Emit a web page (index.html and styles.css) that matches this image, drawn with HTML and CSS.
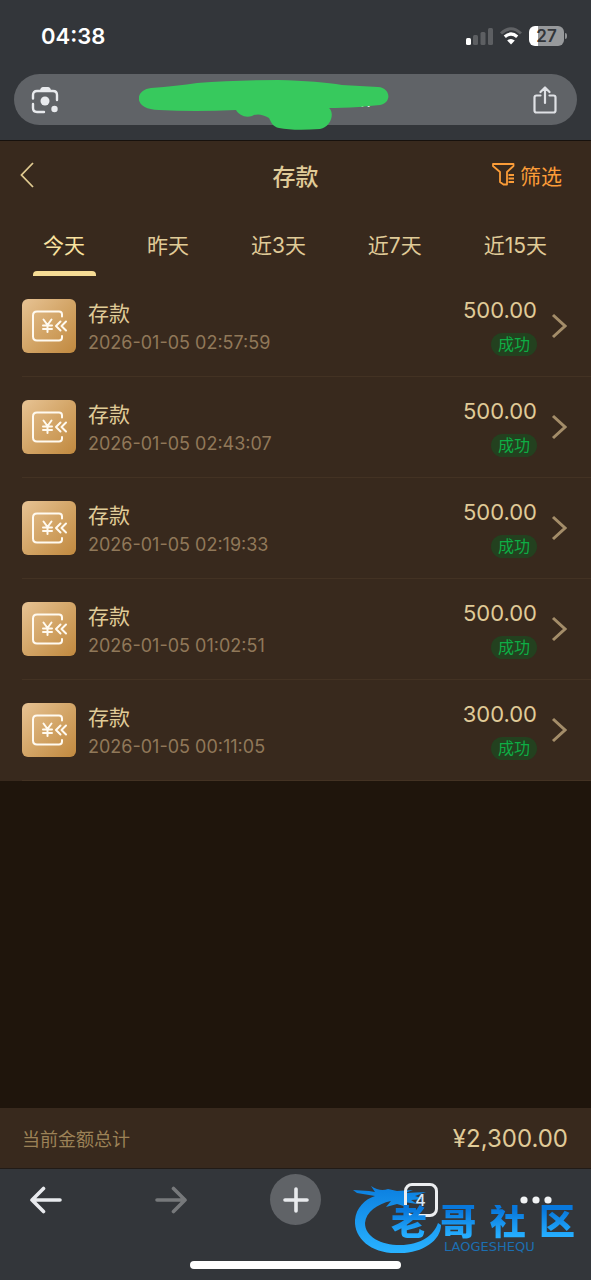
FILE: index.html
```html
<!DOCTYPE html>
<html lang="zh-CN">
<head>
<meta charset="utf-8">
<meta name="viewport" content="width=device-width, initial-scale=1">
<title>存款</title>
<link rel="stylesheet" href="styles.css">
</head>
<body>
<svg class="defs" width="0" height="0" aria-hidden="true">
  <symbol id="deposit" viewBox="0 0 54 54">
    <g fill="none" stroke="#fffaf0" stroke-width="2" stroke-linecap="round" stroke-linejoin="round">
      <path d="M40 17.500v-2q0-3-3-3H15q-4 0-4 4v21q0 4 4 4h22q3 0 3-3V37"/>
      <path d="M21.500 20.500l4 5.500 4-5.500M25.500 26v7M21 26.500h9M21 30h9"/>
      <path d="M38.500 22.500L34 27l4.500 4.500M44 22.500L39.500 27l4.500 4.500"/>
    </g>
  </symbol>
  <symbol id="chevron" viewBox="0 0 16 26">
    <path d="M2 2l12 11L2 24" fill="none" stroke="currentColor" stroke-width="3"/>
  </symbol>
</svg>

<header class="browser-top">
  <div class="status">
    <time class="clock">04:38</time>
    <div class="status-icons">
      <svg width="27" height="18" viewBox="0 0 27 18" aria-hidden="true">
        <rect x="0" y="11" width="5" height="7" rx="1.500" fill="#fff"/>
        <g fill="#5d5f62"><rect x="7" y="8" width="5" height="10" rx="1.500"/><rect x="14.500" y="5" width="5" height="13" rx="1.500"/><rect x="22" y="1" width="5" height="17" rx="1.500"/></g>
      </svg>
      <svg width="22" height="18" viewBox="0 0 22 18" fill="none" aria-hidden="true">
        <path d="M1 6.500q10-9.500 20 0" stroke="#606265" stroke-width="3"/>
        <path d="M4.800 9.800q6.200-5.600 12.400 0" stroke="#fff" stroke-width="3.200"/>
        <path d="M7.200 13.500q3.800-3.200 7.600 0L11 17.500z" fill="#fff"/>
      </svg>
      <div class="battery"><span class="battery-level">27</span></div>
    </div>
  </div>
  <div class="address">
    <button class="icon-btn" aria-label="搜索图片">
      <svg width="28" height="28" viewBox="0 0 28 28" fill="none" stroke="#e8eaed" stroke-width="2.400" stroke-linecap="round" aria-hidden="true">
        <path d="M2 12.500V9q0-4 4-4h16q4 0 4 4v5M2 18v4q0 4 4 4h7"/>
        <path d="M9 4.500Q9.500 1 12 1h5q2.500 0 3 3.500z" fill="#e8eaed" stroke="none"/>
        <circle cx="14" cy="15" r="4.500" fill="#e8eaed" stroke="none"/><circle cx="23.500" cy="23" r="3.200" fill="#e8eaed" stroke="none"/>
      </svg>
    </button>
    <div class="url">
      <span>.com</span>
      <svg class="scribble" width="250" height="50" viewBox="0 0 250 50" aria-hidden="true">
        <path fill="#37c95d" d="M12 8Q38 6 58 3Q95 0 139 0Q180 1 203 5L239 7C252 8 253 23 241 25L220 27Q202 28 190 28C196 33 192 47 181 49Q155 51 140 48C134 47 132 42 130 38Q120 32 113 36C106 38 100 35 97 30Q55 32 20 30C-6 30-5 10 12 8z"/>
      </svg>
    </div>
    <button class="icon-btn" aria-label="分享">
      <svg width="24" height="28" viewBox="0 0 24 28" fill="none" stroke="#dfe1e5" stroke-width="2.200" stroke-linecap="round" stroke-linejoin="round" aria-hidden="true">
        <path d="M7.500 9.500H3.500q-2 0-2 2v13q0 2 2 2h17q2 0 2-2v-13q0-2-2-2h-4M12 17V2M7.500 6L12 1.500 16.500 6"/>
      </svg>
    </button>
  </div>
</header>

<main class="page">
  <div class="panel">
    <div class="title-bar">
      <button class="back" aria-label="返回">
        <svg width="14" height="26" viewBox="0 0 14 26" fill="none" stroke="#e0ca91" stroke-width="1.800" aria-hidden="true"><path d="M13 1L1.500 13 13 25"/></svg>
      </button>
      <h1>存款</h1>
      <button class="filter">
        <svg width="23" height="23" viewBox="0 0 23 23" fill="none" stroke="#fb9c38" stroke-width="1.800" stroke-linejoin="round" aria-hidden="true"><path d="M1 1h20.500v2L15 9v12.500h-3.500L8 19V9L1 3zM16.500 12H22M16.500 15.500H22M16.500 19H22"/></svg>
        筛选
      </button>
    </div>
    <nav class="tabs">
      <button class="tab active">今天</button>
      <button class="tab">昨天</button>
      <button class="tab">近3天</button>
      <button class="tab">近7天</button>
      <button class="tab">近15天</button>
    </nav>
  </div>
  <ul class="list">
    <li><a class="row" href="#"><svg class="badge" aria-hidden="true"><use href="#deposit"/></svg><div class="info"><span class="name">存款</span><time class="date">2026-01-05 02:57:59</time></div><div class="result"><span class="amount">500.00</span><span class="state">成功</span></div><svg class="chevron" aria-hidden="true"><use href="#chevron"/></svg></a></li>
    <li><a class="row" href="#"><svg class="badge" aria-hidden="true"><use href="#deposit"/></svg><div class="info"><span class="name">存款</span><time class="date">2026-01-05 02:43:07</time></div><div class="result"><span class="amount">500.00</span><span class="state">成功</span></div><svg class="chevron" aria-hidden="true"><use href="#chevron"/></svg></a></li>
    <li><a class="row" href="#"><svg class="badge" aria-hidden="true"><use href="#deposit"/></svg><div class="info"><span class="name">存款</span><time class="date">2026-01-05 02:19:33</time></div><div class="result"><span class="amount">500.00</span><span class="state">成功</span></div><svg class="chevron" aria-hidden="true"><use href="#chevron"/></svg></a></li>
    <li><a class="row" href="#"><svg class="badge" aria-hidden="true"><use href="#deposit"/></svg><div class="info"><span class="name">存款</span><time class="date">2026-01-05 01:02:51</time></div><div class="result"><span class="amount">500.00</span><span class="state">成功</span></div><svg class="chevron" aria-hidden="true"><use href="#chevron"/></svg></a></li>
    <li><a class="row" href="#"><svg class="badge" aria-hidden="true"><use href="#deposit"/></svg><div class="info"><span class="name">存款</span><time class="date">2026-01-05 00:11:05</time></div><div class="result"><span class="amount">300.00</span><span class="state">成功</span></div><svg class="chevron" aria-hidden="true"><use href="#chevron"/></svg></a></li>
  </ul>
  <div class="total"><span class="total-label">当前金额总计</span><span class="total-value">¥2,300.00</span></div>
</main>

<footer class="browser-bottom">
  <div class="toolbar">
    <button class="tool" aria-label="后退"><svg width="32" height="28" viewBox="0 0 32 28" fill="none" stroke="#e8eaed" stroke-width="3.600" stroke-linecap="round" stroke-linejoin="round" aria-hidden="true"><path d="M30 14H2M13.500 2.500L2 14l11.500 11.500"/></svg></button>
    <button class="tool" aria-label="前进"><svg width="32" height="28" viewBox="0 0 32 28" fill="none" stroke="#77797b" stroke-width="3.600" stroke-linecap="round" stroke-linejoin="round" aria-hidden="true"><path d="M2 14h28M18.500 2.500L30 14 18.500 25.500"/></svg></button>
    <button class="tool add" aria-label="新标签页"><svg width="26" height="26" viewBox="0 0 26 26" stroke="#e8eaed" stroke-width="3.600" stroke-linecap="round" aria-hidden="true"><path d="M2 13h22M13 2v22"/></svg></button>
    <button class="tool"><span class="count">4</span></button>
    <button class="tool more" aria-label="更多"><svg width="32" height="8" viewBox="0 0 32 8" fill="#f1f3f4" aria-hidden="true"><circle cx="4" cy="4" r="3.600"/><circle cx="16" cy="4" r="3.600"/><circle cx="28" cy="4" r="3.600"/></svg></button>
  </div>
  <div class="home-bar"></div>
  <div class="watermark">
    <svg class="dragon" width="92" height="70" viewBox="0 0 92 70" aria-hidden="true">
      <defs><linearGradient id="blue" x1="0" y1="0" x2="0" y2="1"><stop offset="0" stop-color="#0b7fe0"/><stop offset="1" stop-color="#29b2ff"/></linearGradient></defs>
      <path fill="url(#blue)" d="M0 5L16 6 22 7 18 1Q27 7 35 4L44 6 60 5 52 8 73 7 62 11 71 14 58 15 64 19 51 17 54 22 44 19 33 22 38 16C24 19 13 27 12 38C12 52 28 60 47 60C68 60 81 50 85 38L88 40C88 56 68 69 45 68C19 69 1 54 2 35C3 23 12 14 22 11L4 8z"/>
    </svg>
    <div class="brand"><span>老</span><span>哥</span><span>社</span><span>区</span></div>
    <div class="brand-latin">LAOGESHEQU</div>
  </div>
</footer>
</body>
</html>
```
FILE: styles.css
```css
* { box-sizing: border-box; }
body {
  margin: 0;
  min-height: 100vh;
  display: flex;
  flex-direction: column;
  background: #1f150c;
  color: #e0cb98;
  font-family: Inter, "Noto Sans CJK SC", sans-serif;
}
button {
  padding: 0;
  border: 0;
  background: none;
  color: inherit;
  font: inherit;
}
svg { display: block; }
.defs { position: absolute; }

.browser-top {
  background: #33363a;
  padding: 0 14px 15px;
  border-bottom: 1px solid #17110d;
}
.status {
  height: 74px;
  padding: 0 10px 2px 27px;
  display: flex;
  align-items: center;
  justify-content: space-between;
}
.clock {
  color: #fff;
  font-size: 22px;
  font-weight: 600;
}
.status-icons {
  display: flex;
  align-items: center;
  gap: 7px;
}
.battery {
  position: relative;
  width: 38px;
  padding-right: 3px;
}
.battery::after {
  content: "";
  position: absolute;
  right: 0;
  top: 7px;
  width: 2px;
  height: 6px;
  border-radius: 0 2px 2px 0;
  background: #909294;
}
.battery-level {
  display: block;
  border-radius: 6px;
  background: linear-gradient(90deg, #fff 27%, #97999b 27%);
  color: #33363a;
  font-size: 17px;
  font-weight: 600;
  line-height: 20px;
  text-align: center;
}
.address {
  height: 51px;
  padding: 0 20px 0 17px;
  border-radius: 26px;
  background: #606367;
  display: flex;
  align-items: center;
}
.url {
  position: relative;
  width: 250px;
  margin: 0 auto 0 80px;
  padding-right: 18px;
  color: #eceef0;
  font-size: 20px;
  line-height: 24px;
  text-align: right;
}
.scribble {
  position: absolute;
  left: 0;
  top: -8px;
}

.page {
  flex: 1;
  display: flex;
  flex-direction: column;
}
.panel { background: #38291d; }
.title-bar {
  height: 71px;
  padding: 0 29px 4px 20px;
  display: grid;
  grid-template-columns: 1fr auto 1fr;
  align-items: center;
}
.back { justify-self: start; }
h1 {
  margin: 0;
  padding-left: 9px;
  font-size: 23px;
  font-weight: 500;
}
.filter {
  justify-self: end;
  display: flex;
  align-items: center;
  gap: 5px;
  color: #fb9c38;
  font-size: 21px;
}
.tabs {
  height: 64px;
  padding: 0 44px 0 43px;
  display: flex;
  justify-content: space-between;
}
.tab {
  position: relative;
  font-size: 21px;
}
.active { color: #fae3a0; }
.active::after {
  content: "";
  position: absolute;
  left: -10px;
  right: -11px;
  bottom: 0;
  height: 5px;
  border-radius: 4px 4px 0 0;
  background: #f6dc95;
}

.list {
  margin: 0;
  padding: 0;
  list-style: none;
  background: #38291d;
}
.row {
  height: 101px;
  margin-left: 22px;
  padding-right: 24px;
  border-bottom: 1px solid #433223;
  display: flex;
  align-items: center;
  color: inherit;
  text-decoration: none;
}
.badge {
  width: 54px;
  height: 54px;
  border-radius: 6px;
  background: linear-gradient(135deg, #e7c394, #d3a567 50%, #c1893f);
}
.info {
  flex: 1;
  padding: 2px 0 0 12px;
  display: flex;
  flex-direction: column;
  gap: 3px;
}
.name {
  font-size: 21px;
  line-height: 28px;
}
.date {
  color: #907859;
  font-size: 18px;
  line-height: 24px;
}
.result {
  display: flex;
  flex-direction: column;
  align-items: flex-end;
  gap: 10px;
}
.amount {
  font-size: 22px;
  line-height: 26px;
}
.state {
  padding: 0 7px;
  border-radius: 12px;
  background: #23411f;
  color: #0ead45;
  font-size: 16px;
  line-height: 23px;
}
.chevron {
  width: 16px;
  height: 26px;
  margin-left: 14px;
  color: #a48d69;
}
.total {
  height: 60px;
  margin-top: auto;
  padding: 0 23px 0 22px;
  background: #38291d;
  display: flex;
  align-items: center;
  justify-content: space-between;
}
.total-label {
  color: #9c8257;
  font-size: 18px;
}
.total-value { font-size: 24px; }

.browser-bottom {
  position: relative;
  height: 112px;
  padding-top: 5px;
  border-top: 1px solid #211b17;
  background: #33363a;
}
.toolbar {
  position: relative;
  z-index: 1;
  padding: 0 20px;
  display: flex;
  justify-content: space-between;
}
.tool {
  width: 51px;
  height: 51px;
  display: flex;
  align-items: center;
  justify-content: center;
}
.add {
  border-radius: 50%;
  background: #606367;
}
.count {
  width: 34px;
  padding: 5px 0;
  border: 3px solid #eceef0;
  border-radius: 8px;
  color: #d3e7f8;
  font-size: 16px;
  font-weight: 500;
  line-height: 18px;
}
.more { justify-content: flex-start; }
.home-bar {
  width: 211px;
  height: 8px;
  margin: 36px auto 0;
  border-radius: 4px;
  background: #fff;
}
.watermark {
  position: absolute;
  right: 16px;
  bottom: 25px;
  width: 222px;
  height: 70px;
}
.dragon {
  position: absolute;
  left: 0;
  top: 0;
}
.brand {
  position: absolute;
  z-index: 2;
  left: 38px;
  right: 0;
  top: 20px;
  display: flex;
  justify-content: space-between;
  font-size: 36px;
  font-weight: 900;
  line-height: 34px;
  color: transparent;
  background: linear-gradient(#0878dc 15%, #25aeff 90%);
  -webkit-background-clip: text;
  background-clip: text;
}
.brand-latin {
  position: absolute;
  left: 91px;
  top: 55px;
  color: #1c6fb2;
  font-family: "DejaVu Sans", sans-serif;
  font-size: 13px;
  line-height: 13px;
}
```
